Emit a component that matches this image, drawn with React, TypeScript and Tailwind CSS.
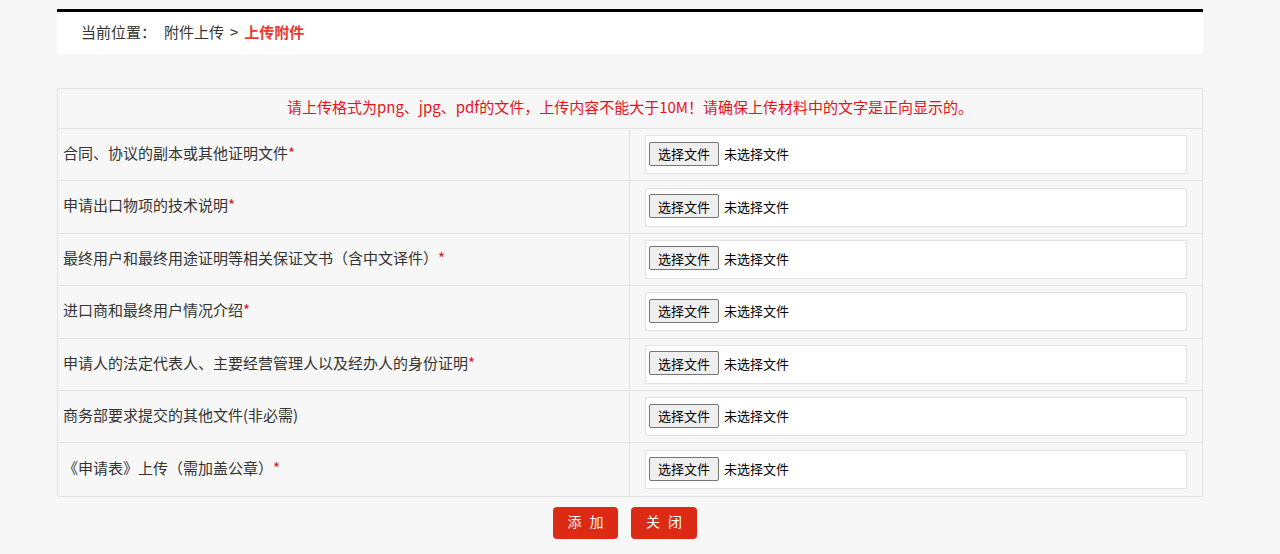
const rows = [
  { label: "合同、协议的副本或其他证明文件", required: true },
  { label: "申请出口物项的技术说明", required: true },
  { label: "最终用户和最终用途证明等相关保证文书（含中文译件）", required: true },
  { label: "进口商和最终用户情况介绍", required: true },
  { label: "申请人的法定代表人、主要经营管理人以及经办人的身份证明", required: true },
  { label: "商务部要求提交的其他文件(非必需)", required: false },
  { label: "《申请表》上传（需加盖公章）", required: true },
];

function FileField() {
  return (
    <div className="h-[39px] bg-white border border-[#e3e3e3] flex items-center px-[3px] pb-[2px]">
      <span className="h-[24px] px-[8px] flex items-center bg-[#efefef] border border-[#767676] rounded-[2px] text-[13px] leading-none text-black">
        选择文件
      </span>
      <span className="ml-[5px] text-[13px] leading-none text-black">未选择文件</span>
    </div>
  );
}

export default function App() {
  return (
    <div
      className="min-h-[554px] bg-[#f7f7f7] pt-[9px] text-[15px] text-[#333]"
      style={{ fontFamily: '"Microsoft YaHei", "Noto Sans CJK SC", sans-serif' }}
    >
      <div className="mx-[57px] w-[1146px] h-[45px] bg-white border-t-[3px] border-black flex items-center pl-[24px] pb-[2px]">
        <span>当前位置：</span>
        <span className="ml-[8px]">附件上传</span>
        <span className="ml-[6px]">&gt;</span>
        <span className="ml-[6px] text-[#e8392c] font-bold">上传附件</span>
      </div>

      <div className="mx-[57px] mt-[34px] w-[1146px] border border-[#e3e3e3] bg-[#f7f7f7]">
        <div className="h-[40px] flex items-center justify-center text-[#e4141b] border-b border-[#e3e3e3] pb-[2px]">
          请上传格式为png、jpg、pdf的文件，上传内容不能大于10M！请确保上传材料中的文字是正向显示的。
        </div>
        {rows.map((r, i) => (
          <div
            key={i}
            className={`h-[52.4px] flex ${i < rows.length - 1 ? "border-b border-[#e3e3e3]" : ""}`}
          >
            <div className="w-[572px] flex items-center pl-[5px] pb-[3px] border-r border-[#e3e3e3]">
              {r.label}
              {r.required && <span className="text-[#e4141b]">*</span>}
            </div>
            <div className="flex-1 flex flex-col justify-center px-[15px]">
              <FileField />
            </div>
          </div>
        ))}
      </div>

      <div className="flex justify-center gap-[13px] mt-[10px] pr-[30px]">
        <button className="w-[65px] h-[32px] rounded-[4px] bg-[#dd2a15] text-white text-[14px] tracking-[8px] pl-[8px] pb-[2px]">
          添加
        </button>
        <button className="w-[66px] h-[32px] rounded-[4px] bg-[#dd2a15] text-white text-[14px] tracking-[8px] pl-[8px] pb-[2px]">
          关闭
        </button>
      </div>
    </div>
  );
}
